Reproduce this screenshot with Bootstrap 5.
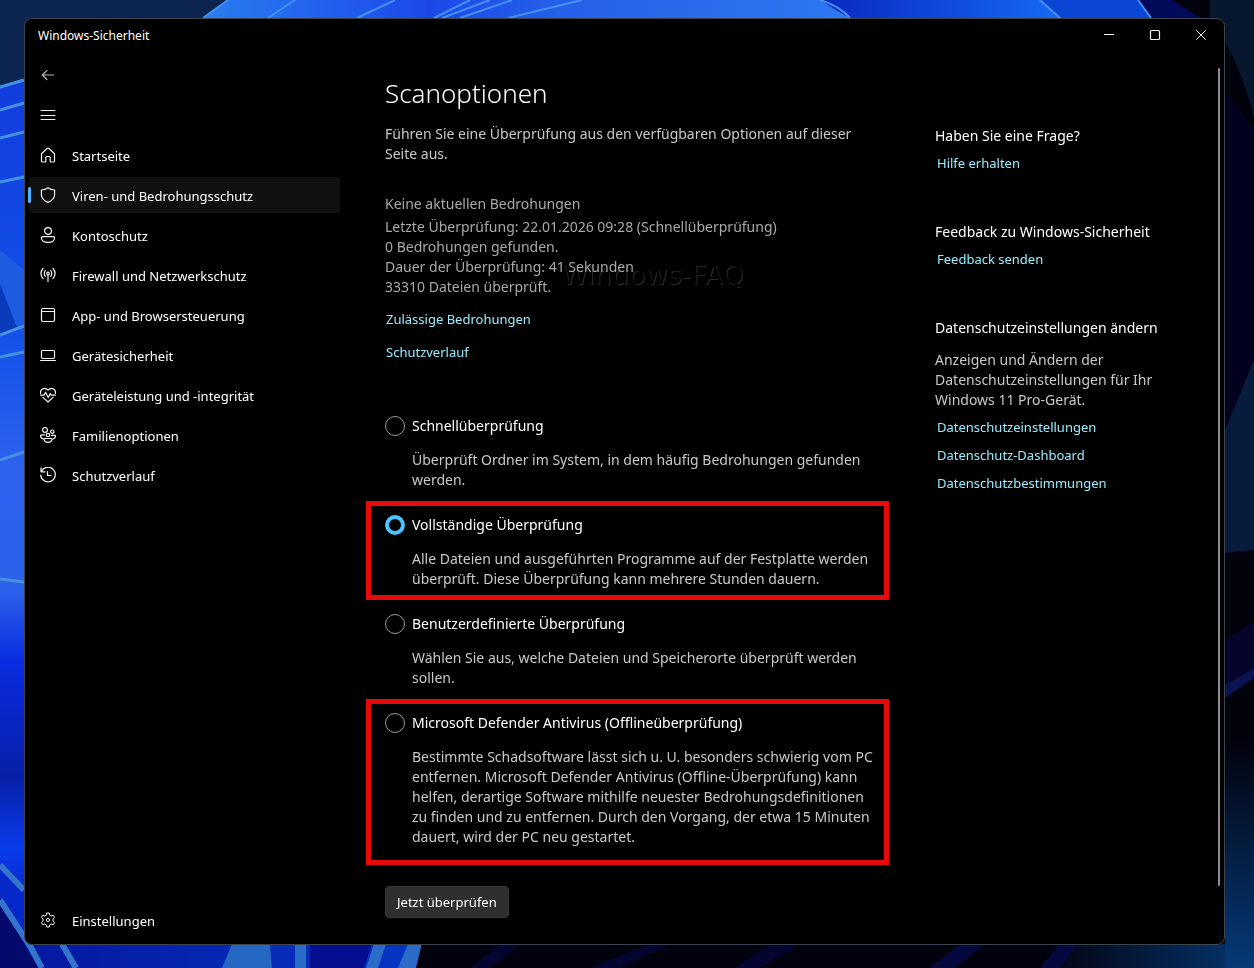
<!DOCTYPE html>
<html lang="de" data-bs-theme="dark">
<head>
<meta charset="utf-8">
<meta name="viewport" content="width=device-width, initial-scale=1">
<title>Windows-Sicherheit</title>
<link href="https://cdn.jsdelivr.net/npm/bootstrap@5.3.0/dist/css/bootstrap.min.css" rel="stylesheet">
<style>
  body { font-family: "Noto Sans", "Open Sans", sans-serif; font-size: 14px; line-height: 20px; color: #fff; background: #03051f; padding: 18px 29px 23px 24px; }
  .wallpaper { position: fixed; inset: 0; width: 100%; height: 100%; z-index: -1; }
  .app-window { background: #000; border: 1px solid #3c4450; border-radius: 8px; }
  .title-bar { height: 32px; font-size: 12px; padding-left: 13px; }
  .title-bar > span { padding-top: 2px; }
  .caption-btn { width: 46px; height: 32px; border: 0; border-radius: 0; padding: 0; display: grid; place-items: center; }
  svg.glyph { width: 16px; height: 16px; flex: none; fill: none; stroke: #f4f4f4; stroke-width: 1.2; stroke-linecap: round; stroke-linejoin: round; }
  .side-nav { flex: 0 0 315px; padding: 6px 0 6px 4px; font-size: 13px; }
  .side-item { display: flex; align-items: center; gap: 16px; height: 36px; padding: 2px 11px 0; border: 0; border-radius: 4px; color: #fff; background: transparent; text-decoration: none; position: relative; }
  .side-item svg { margin-bottom: 2px; }
  .side-item:hover, .side-item.active { background: #101010; color: #fff; }
  .side-item.active::before { content: ""; position: absolute; left: -1px; top: 10px; width: 3px; height: 16px; border-radius: 2px; background: #4cb4ff; }
  .scan-main { flex: 1 1 0; min-width: 0; margin-left: 26px; padding: 24px 0 25px; }
  .inset { padding: 0 13px 0 19px; }
  h1 { font-size: 26px; line-height: 36px; font-weight: 300; margin-bottom: 13px; }
  .soft { color: #c9c9c9; }
  .dim { color: #a9a9a9; }
  .fine-link { font-size: 13px; color: #99ebff; text-decoration: none; padding-left: 2px; }
  .fine-link:hover { color: #c5f4ff; text-decoration: underline; }
  .threat-state { margin: 30px 0 3px; }
  .link-stack { gap: 13px; margin: 12px 0 40px; }
  .link-stack .fine-link { padding-left: 1px; }
  .scan-option { border: 5px solid transparent; padding: 9px 8px 6px 14px; }
  .scan-option.flagged { border-color: #e60a0a; }
  .scan-option:last-child { padding-bottom: 13px; }
  .scan-option label { display: flex; align-items: center; gap: 7px; color: #fff; }
  .scan-option input { appearance: none; width: 20px; height: 20px; margin: 0; flex: none; border: 1px solid #9a9a9a; border-radius: 50%; background: #000; }
  .scan-option input:checked { border: 4px solid #4cc2ff; }
  .scan-option p { margin: 14px 0 0 27px; }
  .scan-actions { margin-top: 21px; }
  .scan-btn { font-size: 13px; line-height: 20px; height: 32px; padding: 0 11px; color: #fff; background: #2f2f2f; border: 1px solid #353535; border-radius: 4px; }
  .help-side { flex: 0 0 289px; margin-left: 46px; padding: 75px 50px 0 0; }
  .help-side h2 { font-size: 14px; line-height: 20px; font-weight: 400; margin: 0; white-space: nowrap; }
  .help-side section { display: flex; flex-direction: column; align-items: flex-start; margin-bottom: 49px; }
  .help-side p { margin: 12px 0 0; }
  .help-side .fine-link { margin-top: 8px; }
  .help-side h2 + .fine-link, .help-side p + .fine-link { margin-top: 7px; }
  .scroll-thumb { position: absolute; right: 4px; top: 49px; bottom: 58px; width: 2px; border-radius: 1px; background: #8e8e8e; }
  .stamp { position: absolute; left: 176px; top: 42px; z-index: 0; font: 27px/32px "DejaVu Sans", sans-serif; color: #000; text-shadow: 1px 1px 0 #292929; }
  .over-stamp { position: relative; z-index: 1; }
  @media (max-width: 991px) {
    .panes { flex-wrap: wrap; }
    .side-nav, .scan-main, .help-side { flex: 1 0 100%; margin-left: 0; }
    .help-side { padding: 24px 19px; }
  }
</style>
</head>
<body class="min-vh-100 d-flex">

<svg class="wallpaper" viewBox="0 0 1254 968" preserveAspectRatio="none" aria-hidden="true">
  <defs>
    <linearGradient id="topBlue" x1="0" x2="1"><stop offset="0" stop-color="#2a7df0"/><stop offset=".35" stop-color="#1c48ea"/><stop offset=".55" stop-color="#2560e8"/><stop offset="1" stop-color="#2f78f2"/></linearGradient>
    <linearGradient id="topRight" x1="0" x2="1"><stop offset="0" stop-color="#0a28c0"/><stop offset="1" stop-color="#166af2"/></linearGradient>
    <linearGradient id="leftBlue" x1="0" x2="0" y1="0" y2="1"><stop offset="0" stop-color="#123ddc"/><stop offset=".3" stop-color="#1150e8"/><stop offset=".48" stop-color="#2d62ee"/><stop offset=".63" stop-color="#2a62ea"/><stop offset=".72" stop-color="#0a2be0"/><stop offset=".86" stop-color="#0720a8"/><stop offset=".95" stop-color="#0a3cec"/><stop offset="1" stop-color="#0628c8"/></linearGradient>
    <linearGradient id="cornerGlow" x1="0" x2="0" y1="0" y2="1"><stop offset="0" stop-color="#02020c"/><stop offset=".6" stop-color="#04244e"/><stop offset="1" stop-color="#053a78"/></linearGradient>
    <linearGradient id="footGlow" x1="0" x2="1"><stop offset="0" stop-color="#02020e"/><stop offset="1" stop-color="#05366e"/></linearGradient>
    <linearGradient id="footBlue" x1="0" x2="1"><stop offset="0" stop-color="#0518a0"/><stop offset="1" stop-color="#0636c4"/></linearGradient>
  </defs>
  <rect width="1254" height="968" fill="#02020c"/>
  <path d="M0 0H260V90H0Z" fill="#0b2450"/>
  <path d="M228 0H820L850 18V22H203V18Z" fill="url(#topBlue)"/>
  <path d="M820 0H1040L1060 18V22H850V18Z" fill="url(#topRight)"/>
  <path d="M1040 0H1138L1151 18V22H1060V18Z" fill="#0b45d4"/>
  <path d="M1138 0H1172L1200 18H1151Z" fill="#030a5a"/>
  <path d="M1210 0H1254V118Q1240 60 1210 18Z" fill="#07172e"/>
  <path d="M228 0L203 18M295 0L268 18M395 0L357 18M470 0L434 18M490 0L442 18M512 0L460 18M582 0L508 18M820 0Q840 6 850 18M1040 0L1060 18M1138 0L1151 18" fill="none" stroke="#4590f0" stroke-width="2"/>
  <path d="M0 87L24 80V890L0 863Z" fill="url(#leftBlue)"/>
  <path d="M0 250L24 270V325L0 335Z" fill="#1d5be0"/>
  <path d="M0 284L18 330L0 335Z" fill="#0a3aba"/>
  <path d="M0 87L24 80M0 110L24 103M0 138L24 132M0 182L24 177M0 335L24 326M0 357L24 352M0 460L24 452M0 579L24 582" fill="none" stroke="#4590e0" stroke-width="3"/>
  <path d="M0 863L24 890V945L0 898Z" fill="#0628c8"/>
  <path d="M0 898L44 968H0Z" fill="#040a6c"/>
  <path d="M24 944H420V968H38Z" fill="url(#footBlue)"/>
  <path d="M0 865L24 890M0 900L30 946L42 968M62 944L76 968" fill="none" stroke="#3474cc" stroke-width="6"/>
  <path d="M232 944H270L272 968H222Z" fill="#2468c4"/>
  <path d="M295 944H306V968H295ZM374 944H386L378 968H366ZM408 944H422L416 968H398Z" fill="#2a6cc8"/>
  <path d="M310 944H372L364 968H310Z" fill="#050e90"/>
  <path d="M422 944H1225V968H416Z" fill="#02020e"/>
  <path d="M500 944H520L490 968H470ZM650 944H670L620 968H590ZM770 944H800L760 968H735Z" fill="#040430"/>
  <path d="M1060 944H1254V968H1040Z" fill="url(#footGlow)"/>
  <path d="M960 944H985L955 968H930ZM1060 944H1078L1060 968H1040Z" fill="#05083e"/>
  <path d="M1225 90L1254 130V360L1225 430Z" fill="#02021e"/>
  <path d="M1254 360V550L1225 553V430Z" fill="#071c3c"/>
  <path d="M1225 640L1254 622V670L1225 698Z" fill="#05052c"/>
  <path d="M1225 685L1254 668V678L1225 698Z" fill="#0a1250"/>
  <rect x="1225" y="740" width="29" height="228" fill="url(#cornerGlow)"/>
</svg>

<div class="app-window position-relative d-flex flex-column flex-grow-1">
  <header class="title-bar d-flex align-items-center">
    <span class="me-auto">Windows-Sicherheit</span>
    <button type="button" class="btn caption-btn" aria-label="Minimieren"><svg class="glyph" viewBox="0 0 16 16"><path d="M3.500 7.500H12.500"/></svg></button>
    <button type="button" class="btn caption-btn" aria-label="Maximieren"><svg class="glyph" viewBox="0 0 16 16"><rect x="3.500" y="3.500" width="9" height="9" rx="1"/></svg></button>
    <button type="button" class="btn caption-btn" aria-label="Schließen"><svg class="glyph" viewBox="0 0 16 16"><path d="M3.500 3.500L12.500 12.500M12.500 3.500L3.500 12.500" stroke-width="1"/></svg></button>
  </header>

  <div class="panes d-flex flex-grow-1">
    <nav class="side-nav d-flex flex-column gap-1" aria-label="Navigation">
      <button type="button" class="side-item align-self-start" aria-label="Zurück"><svg class="glyph" viewBox="0 0 16 16" opacity=".75"><path d="M13.500 8H2.500M7 3.300L2.300 8L7 12.700"/></svg></button>
      <button type="button" class="side-item align-self-start" aria-label="Menü"><svg class="glyph" viewBox="0 0 16 16"><path d="M1 3.500H15M1 8.500H15M1 12.500H15" stroke-width="1"/></svg></button>
      <a href="#" class="side-item"><svg class="glyph" viewBox="0 0 16 16"><path d="M1.500 6.800L7 1.500Q8 .7 9 1.500L14.500 6.800V14.200Q14.500 15 13.700 15H11Q10.200 15 10.200 14.200V10.500Q10.200 9.500 9.200 9.500H6.800Q5.800 9.500 5.800 10.500V14.200Q5.800 15 5 15H2.300Q1.500 15 1.500 14.200Z"/></svg>Startseite</a>
      <a href="#" class="side-item active" aria-current="page"><svg class="glyph" viewBox="0 0 16 16"><path d="M8 .7Q10.800 2.800 14.600 3V7.500Q14.600 12.700 8 15.400Q1.400 12.700 1.400 7.500V3Q5.200 2.800 8 .7Z"/></svg>Viren- und Bedrohungsschutz</a>
      <a href="#" class="side-item"><svg class="glyph" viewBox="0 0 16 16"><circle cx="8" cy="4" r="3.400"/><path d="M2.800 9.600H13.200Q14.600 9.600 14.600 11Q14.200 15.400 8 15.400Q1.800 15.400 1.400 11Q1.400 9.600 2.800 9.600Z"/></svg>Kontoschutz</a>
      <a href="#" class="side-item"><svg class="glyph" viewBox="0 0 16 16"><circle cx="8" cy="6.500" r="1.300"/><path d="M8 8V14.500M5.200 9.500Q3.300 6.500 5.200 3.500M10.800 9.500Q12.700 6.500 10.800 3.500M3 11.500Q-1.200 6.500 3 1.500M13 11.500Q17.200 6.500 13 1.500"/></svg>Firewall und Netzwerkschutz</a>
      <a href="#" class="side-item"><svg class="glyph" viewBox="0 0 16 16"><rect x="1.500" y="1.500" width="13" height="13" rx="1.500"/><path d="M1.500 4.500H14.500"/></svg>App- und Browsersteuerung</a>
      <a href="#" class="side-item"><svg class="glyph" viewBox="0 0 16 16"><rect x="1.500" y="3.500" width="13" height="8" rx="1.200"/><path d="M.6 13.500H15.400"/></svg>Gerätesicherheit</a>
      <a href="#" class="side-item"><svg class="glyph" viewBox="0 0 16 16"><path d="M.6 6.500Q0 4 2 2.200Q5 .2 8 3.200Q11 .2 14 2.200Q16 4 15.400 6.500M.6 8.200H4L5.600 5.200L8.200 10.400L10.400 6.600L11.400 8.200H15.400M3 10.400L8 15L13 10.400"/></svg>Geräteleistung und -integrität</a>
      <a href="#" class="side-item"><svg class="glyph" viewBox="0 0 16 16"><circle cx="5" cy="2.900" r="2.400"/><circle cx="12.300" cy="4.700" r="1.700"/><circle cx="8" cy="8" r="1.700"/><path d="M4.500 7.800H1.500Q.5 7.800 .5 8.900Q.7 11.500 3.500 12M11.300 8.300H14.500Q15.500 8.300 15.500 9.300Q15.200 11.600 12.700 12M5 11.500H11Q12 11.500 12 12.500Q11.400 15.400 8 15.400Q4.600 15.400 4 12.500Q4 11.500 5 11.500Z"/></svg>Familienoptionen</a>
      <a href="#" class="side-item"><svg class="glyph" viewBox="0 0 16 16"><path d="M1 .9V4.800H5M1.300 4.600A7.300 7.300 0 1 1 .7 8M7.500 4.500V8.500H11"/></svg>Schutzverlauf</a>
      <a href="#" class="side-item mt-auto"><svg class="glyph" viewBox="0 0 16 16"><path stroke-width="1" d="M6.800 1H9.200L9.700 3.100L11.200 4L13.300 3.300L14.500 5.400L13 7V9L14.500 10.600L13.300 12.700L11.200 12L9.700 12.900L9.200 15H6.800L6.300 12.900L4.800 12L2.700 12.700L1.500 10.600L3 9V7L1.500 5.400L2.700 3.300L4.800 4L6.300 3.100Z"/><circle cx="8" cy="8" r="1.600" stroke-width="1"/></svg>Einstellungen</a>
    </nav>

    <main class="scan-main">
      <div class="inset">
        <h1>Scanoptionen</h1>
        <p class="soft mb-0">Führen Sie eine Überprüfung aus den verfügbaren Optionen auf dieser Seite aus.</p>
        <div class="dim threat-state">Keine aktuellen Bedrohungen</div>
        <div class="dim position-relative">
          <span class="stamp" aria-hidden="true">Windows-FAQ</span>
          <div class="over-stamp">Letzte Überprüfung: 22.01.2026 09:28 (Schnellüberprüfung)<br>0 Bedrohungen gefunden.<br>Dauer der Überprüfung: 41 Sekunden<br>33310 Dateien überprüft.</div>
        </div>
        <div class="link-stack d-flex flex-column align-items-start">
          <a href="#" class="fine-link">Zulässige Bedrohungen</a>
          <a href="#" class="fine-link">Schutzverlauf</a>
        </div>
      </div>

      <form>
        <div role="radiogroup" aria-label="Scanoptionen">
          <div class="scan-option soft">
            <label><input type="radio" name="scan">Schnellüberprüfung</label>
            <p>Überprüft Ordner im System, in dem häufig Bedrohungen gefunden werden.</p>
          </div>
          <div class="scan-option flagged soft">
            <label><input type="radio" name="scan" checked>Vollständige Überprüfung</label>
            <p>Alle Dateien und ausgeführten Programme auf der Festplatte werden überprüft. Diese Überprüfung kann mehrere Stunden dauern.</p>
          </div>
          <div class="scan-option soft">
            <label><input type="radio" name="scan">Benutzerdefinierte Überprüfung</label>
            <p>Wählen Sie aus, welche Dateien und Speicherorte überprüft werden sollen.</p>
          </div>
          <div class="scan-option flagged soft">
            <label><input type="radio" name="scan">Microsoft Defender Antivirus (Offlineüberprüfung)</label>
            <p>Bestimmte Schadsoftware lässt sich u. U. besonders schwierig vom PC entfernen. Microsoft Defender Antivirus (Offline-Überprüfung) kann helfen, derartige Software mithilfe neuester Bedrohungsdefinitionen zu finden und zu entfernen. Durch den Vorgang, der etwa 15 Minuten dauert, wird der PC neu gestartet.</p>
          </div>
        </div>
        <div class="inset scan-actions"><button type="button" class="btn scan-btn">Jetzt überprüfen</button></div>
      </form>
    </main>

    <aside class="help-side">
      <section>
        <h2>Haben Sie eine Frage?</h2>
        <a href="#" class="fine-link">Hilfe erhalten</a>
      </section>
      <section>
        <h2>Feedback zu Windows-Sicherheit</h2>
        <a href="#" class="fine-link">Feedback senden</a>
      </section>
      <section>
        <h2>Datenschutzeinstellungen ändern</h2>
        <p class="soft">Anzeigen und Ändern der Datenschutzeinstellungen für Ihr Windows 11 Pro-Gerät.</p>
        <a href="#" class="fine-link">Datenschutzeinstellungen</a>
        <a href="#" class="fine-link">Datenschutz-Dashboard</a>
        <a href="#" class="fine-link">Datenschutzbestimmungen</a>
      </section>
    </aside>
  </div>
  <div class="scroll-thumb"></div>
</div>

<script src="https://cdn.jsdelivr.net/npm/bootstrap@5.3.0/dist/js/bootstrap.bundle.min.js"></script>
</body>
</html>
